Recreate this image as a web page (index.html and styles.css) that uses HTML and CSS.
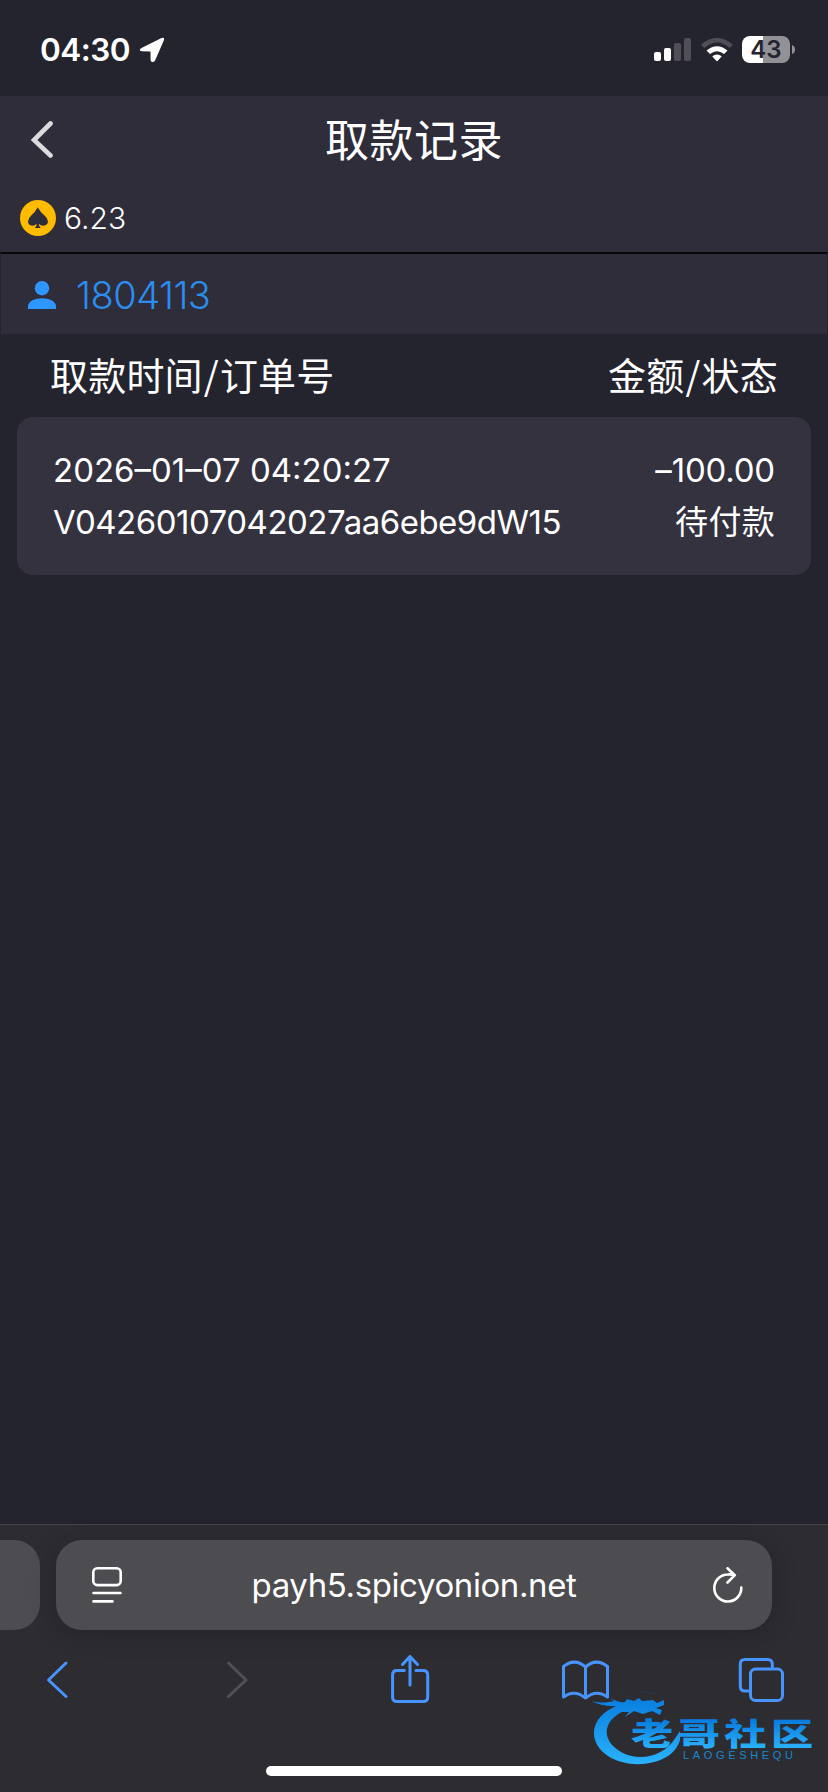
FILE: index.html
```html
<!DOCTYPE html>
<html lang="zh-CN">
<head>
<meta charset="UTF-8">
<meta name="viewport" content="width=device-width, initial-scale=1.0">
<title>取款记录</title>
<link rel="stylesheet" href="styles.css">
</head>
<body>
<div class="phone">
    <div class="status-bar">
        <span class="time">04:30</span>
        <svg class="location" width="26" height="26" viewBox="0 0 26 26"><path d="M2 11.2 22.5 1.1Q25.8 0 24.9 3.2L16.2 23.3Q14.8 26 12.2 24.4Q11.6 23.8 11.6 22.8L11.5 14.4 2.8 14.2Q-.8 13.6 2 11.2Z" fill="#fff"/></svg>
        <div class="status-icons">
            <svg width="38" height="24" viewBox="0 0 38 24">
                <rect x="0" y="14" width="7" height="9" rx="2" fill="#fff"/>
                <rect x="10" y="10" width="7" height="13" rx="2" fill="#fff"/>
                <rect x="20" y="5" width="7" height="18" rx="2" fill="#504f58"/>
                <rect x="30" y="0" width="7" height="23" rx="2" fill="#504f58"/>
            </svg>
            <svg width="32" height="24" viewBox="0 0 32 24">
                <path d="M0 6.7Q16-6.9 32 6.7L28.6 10Q16-1 3.4 10Z" fill="#504f58"/>
                <path d="M5.5 12.6Q16 4 26.5 12.6L23 16Q16 10.4 9 16Z" fill="#fff"/>
                <path d="M11.2 18.3Q16 14.8 20.8 18.3L17 22.5Q16 24 15 22.5Z" fill="#fff"/>
            </svg>
            <div class="battery">43</div>
            <svg class="battery-cap" width="3" height="9" viewBox="0 0 3 9"><path d="M0 0Q3 1 3 4.500Q3 8 0 9Z" fill="#929196"/></svg>
        </div>
    </div>

    <div class="header">
        <div class="title-row">
            <svg class="back" width="22" height="38" viewBox="0 0 22 38"><path d="M19.500 2.500 3 19 19.500 34.500" fill="none" stroke="#dcdcde" stroke-width="4.600" stroke-linecap="round"/></svg>
            <h1>取款记录</h1>
        </div>
        <div class="balance">
            <svg width="36" height="36" viewBox="0 0 36 36">
                <circle cx="18" cy="18" r="18" fill="#fb0"/>
                <path d="M17.700 7.300Q20.500 12.500 24.500 15.500Q28 18.400 28 21.500Q27.500 25.500 23.500 25.700Q20.500 25.800 18.800 23.700Q19 27 20.700 28H14.900Q16.500 27 16.700 23.700Q15 25.800 12 25.700Q8.300 25.400 8 21.500Q8 18.400 11.200 15.500Q15.200 12.300 17.700 7.300Z" fill="#2e2d39"/>
            </svg>
            <span>6.23</span>
        </div>
    </div>

    <div class="account">
        <svg width="28" height="28" viewBox="0 0 28 28" fill="#2e96ff"><circle cx="14" cy="7.200" r="7.200"/><path d="M0 28V25.500C0 14.500 28 14.500 28 25.500V28Z"/></svg>
        <span>1804113</span>
    </div>

    <div class="list-head">
        <span>取款时间<i>/</i>订单号</span>
        <span>金额<i>/</i>状态</span>
    </div>

    <div class="record">
        <div class="record-row">
            <span class="date">2026–01–07 04:20:27</span>
            <span class="amount">–100.00</span>
        </div>
        <div class="record-row">
            <span class="order">V04260107042027aa6ebe9dW15</span>
            <span class="state">待付款</span>
        </div>
    </div>

    <div class="browser">
        <div class="tabs">
            <div class="prev-tab"></div>
            <div class="address">
                <svg width="30" height="36" viewBox="0 0 30 36" fill="none" stroke="#fff" stroke-width="2.600" stroke-linecap="round">
                    <rect x="1.300" y="1.300" width="27.400" height="16.800" rx="4"/>
                    <path d="M1.500 26H28.500M1.500 34.400H20.500"/>
                </svg>
                <span class="url">payh5.spicyonion.net</span>
                <svg width="30" height="36" viewBox="0 0 30 36" fill="none" stroke="#fff" stroke-width="2.600" stroke-linecap="round" stroke-linejoin="round">
                    <path d="M28.300 20.500A13.500 13.500 0 1 1 14.800 7.500Q18 7.200 21 8M14.500 1.300 21.800 8.200 14.500 15.500"/>
                </svg>
            </div>
        </div>
        <div class="toolbar">
            <svg class="tool" width="48" height="50" viewBox="0 0 48 50"><path d="M33 8 15.500 25 33 41.500"/></svg>
            <svg class="tool off" width="48" height="50" viewBox="0 0 48 50"><path d="M19.500 8 37 25 19.500 41.500"/></svg>
            <svg class="tool" width="48" height="50" viewBox="0 0 48 50"><path d="M19.300 15.600H12Q7.600 15.600 7.600 20V42Q7.600 46.500 12 46.500H38.200Q42.700 46.500 42.700 42V20Q42.700 15.600 38.200 15.600H31M25 30V2M17.500 9.500 25 1.500 32.500 9.500"/></svg>
            <svg class="tool" width="48" height="50" viewBox="0 0 48 50"><path d="M24.500 12Q13.500 2.500 2.500 11.500V42Q13.500 34 24.500 43Q35.500 34 46.500 42V11.500Q35.500 2.500 24.500 12V43"/></svg>
            <svg class="tool" width="48" height="50" viewBox="0 0 48 50"><rect x="13.500" y="14" width="32" height="31.500" rx="5"/><path d="M13 36H8Q3.300 36 3.300 31.500V9Q3.300 4.500 8 4.500H30.500Q35.300 4.500 35.300 9V13.500"/></svg>
        </div>
        <div class="home-indicator"></div>
    </div>

    <!-- community watermark -->
    <svg class="watermark" width="228" height="84" viewBox="0 0 228 84">
        <defs>
            <linearGradient id="ring" gradientUnits="userSpaceOnUse" x1="0" y1="8" x2="0" y2="74"><stop offset="0" stop-color="#087fdf"/><stop offset="1" stop-color="#2bb3fb"/></linearGradient>
            <linearGradient id="word" gradientUnits="userSpaceOnUse" x1="0" y1="28" x2="0" y2="58"><stop offset="0" stop-color="#0779dc"/><stop offset="1" stop-color="#2bb3fb"/></linearGradient>
        </defs>
        <path d="M28 14C-1 24-5 50 17 65C40 80 82 74 89 49V40L85 46C73 66 48 71 30 61C9 49 11 28 37 18Z" fill="url(#ring)"/>
        <path d="M1 10Q10 13 23 10L19 7Q28 12 34 11L36 8 43 10 48 7 51 10 62 9 66 12 73 9V14L65 17 71 19 69 24 61 20 52 23 43 20 34 26 38 21 28 21 33 18 20 19 27 15Q10 16 1 10Z" fill="url(#ring)"/>
        <path d="M29 2Q34 6 43 7M49 1Q64 0 72 8" fill="none" stroke="#25384b" stroke-width="1"/>
        <text class="mark-name" y="54.500" fill="url(#word)" transform="translate(40 0) scale(1.36 1)">老哥社区</text>
        <text class="mark-latin" x="92" y="67.500" textLength="110" fill="#1688d0">LAOGESHEQU</text>
    </svg>
</div>
</body>
</html>
```
FILE: styles.css
```css
* {
    box-sizing: border-box;
}

body {
    margin: 0;
    background-color: #24242e;
    color: #fff;
    font-family: Inter, "Noto Sans CJK SC", sans-serif;
}

svg {
    display: block;
    flex: none;
}

.phone {
    position: relative;
    display: flex;
    flex-direction: column;
    width: 828px;
    height: 1792px;
    overflow: hidden;
}

.status-bar {
    display: flex;
    align-items: center;
    height: 96px;
    padding: 3px 33px 0 40px;
}

.time {
    font-size: 31.5px;
    font-weight: 600;
    letter-spacing: -0.5px;
}

.location {
    margin-left: 9px;
}

.status-icons {
    display: flex;
    align-items: center;
    margin-left: auto;
}

.status-icons svg + svg {
    margin-left: 9px;
}

.battery {
    width: 48px;
    height: 27px;
    margin-left: 9px;
    border-radius: 8px;
    background: linear-gradient(90deg, #fff 21px, #929196 21px);
    color: #24242e;
    font-size: 24px;
    font-weight: 600;
    line-height: 27px;
    text-align: center;
}

.battery-cap {
    margin-left: 2px;
}

.header {
    height: 156px;
    background-color: #2e2d39;
}

.title-row {
    display: flex;
    align-items: center;
    height: 88px;
    padding: 0 31px;
}

.title-row h1 {
    flex: 1;
    margin: 2px 22px 0 0;
    font-size: 44px;
    font-weight: 400;
    letter-spacing: 0.5px;
    line-height: 60px;
    text-align: center;
}

.balance {
    display: flex;
    align-items: center;
    height: 68px;
    padding: 0 20px;
}

.balance span {
    margin-left: 8px;
    padding-bottom: 1px;
    font-size: 30px;
    font-weight: 300;
    line-height: 34px;
}

.account {
    display: flex;
    align-items: center;
    height: 82px;
    padding: 2px 27px 0;
    border: 1px solid #24242e;
    border-top: 2px solid #08080b;
    border-bottom: 0;
    background-color: #2e2d39;
    color: #2b8df0;
}

.account span {
    margin-left: 20px;
    font-size: 38px;
    font-weight: 300;
    letter-spacing: -0.5px;
}

.list-head {
    display: flex;
    justify-content: space-between;
    height: 83px;
    padding: 0 50px;
    font-family: "Noto Sans CJK SC", sans-serif;
    font-size: 38px;
    letter-spacing: 0.2px;
    line-height: 79px;
}

.list-head i {
    padding: 0 1px;
    font-style: normal;
}

.record {
    height: 158px;
    margin: 0 17px;
    padding: 27px 36px;
    border-radius: 16px;
    background-color: #33323e;
}

.record-row {
    display: flex;
    justify-content: space-between;
    height: 52px;
    font-size: 33px;
    line-height: 52px;
}

.order {
    letter-spacing: -0.5px;
}

.amount {
    letter-spacing: -0.2px;
}

.state {
    letter-spacing: 0.3px;
}

.browser {
    height: 268px;
    margin-top: auto;
    padding-top: 15px;
    border-top: 1px solid #454549;
    background-color: #2d2c31;
}

.tabs {
    display: flex;
    gap: 16px;
    height: 90px;
}

.prev-tab {
    width: 40px;
    border-radius: 0 26px 26px 0;
    background-color: #4d4c51;
}

.address {
    display: flex;
    align-items: center;
    width: 716px;
    padding: 0 29px 0 36px;
    border-radius: 26px;
    background-color: #4d4c51;
    box-shadow: 0 4px 24px rgba(20, 20, 24, 0.3);
    font-size: 33px;
}

.url {
    flex: 1;
    padding-right: 7px;
    letter-spacing: -0.4px;
    text-align: center;
}

.toolbar {
    display: flex;
    justify-content: space-between;
    padding: 25px 43px 0 33px;
}

.tool {
    fill: none;
    stroke: #4794ff;
    stroke-width: 3;
    stroke-linecap: round;
    stroke-linejoin: round;
}

.off {
    stroke: #515054;
}

.home-indicator {
    width: 296px;
    height: 10px;
    margin: 61px auto 0;
    border-radius: 5px;
    background-color: #fff;
}

.watermark {
    position: absolute;
    left: 591px;
    top: 1691px;
}

.mark-name {
    font-family: "Noto Sans CJK SC", sans-serif;
    font-size: 31px;
    font-weight: 900;
    letter-spacing: 3.3px;
}

.mark-latin {
    font-family: "Liberation Sans", sans-serif;
    font-size: 11px;
}
```
